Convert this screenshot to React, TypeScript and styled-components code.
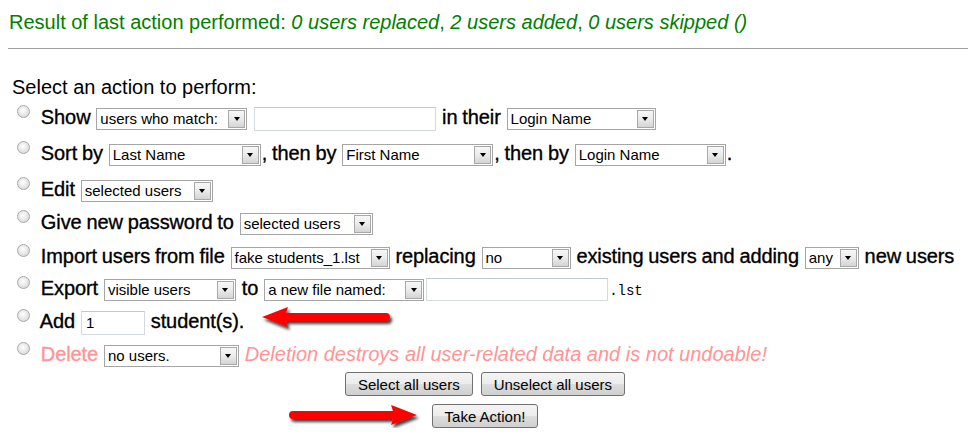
import React from "react";
import styled, { createGlobalStyle } from "styled-components";

const Global = createGlobalStyle`
  html, body { background: #fff; }
  body {
    margin: 8px;
    font-family: "Liberation Sans", Arial, sans-serif;
    color: #000;
  }
`;

const Page = styled.div`
  position: relative;
`;

const Result = styled.div`
  font-size: 20px;
  line-height: 28px;
  color: #008000;
  padding-left: 1px;
  white-space: nowrap;
`;

const Rule = styled.div`
  margin: 12px -8px 0 0;
  border-top: 1px solid #a0a0a0;
`;

const Actions = styled.form`
  margin-top: 25px;
  padding-left: 4px;
`;

const Title = styled.div`
  font-size: 20px;
  line-height: 26px;
  white-space: nowrap;
`;

const Row = styled.div<{ $h: number; $danger?: boolean }>`
  height: ${(p) => p.$h}px;
  line-height: ${(p) => p.$h}px;
  font-size: 20px;
  font-weight: normal;
  letter-spacing: -0.1px;
  word-spacing: -0.6px;
  -webkit-text-stroke: 0.35px ${(p) => (p.$danger ? "#ff9494" : "#000")};
  white-space: nowrap;
  color: ${(p) => (p.$danger ? "#ff9494" : "#000")};
`;

const Radio = styled.span`
  display: inline-block;
  box-sizing: border-box;
  width: 13px;
  height: 13px;
  margin: 0 6px 0 5px;
  border-radius: 50%;
  border: 1px solid #a8a8a8;
  background: radial-gradient(circle at 45% 40%, #ffffff 0%, #ececec 40%, #cfcfcf 100%);
  vertical-align: 6px;
`;

const SelectBox = styled.span<{ $w: number }>`
  display: inline-flex;
  box-sizing: border-box;
  width: ${(p) => p.$w}px;
  height: 22px;
  margin: 0 1px;
  border: 1px solid #a5a5a5;
  background: #fff;
  vertical-align: middle;
  font-size: 15px;
  font-weight: normal;
  font-style: normal;
  line-height: 20px;
  letter-spacing: 0;
  word-spacing: 0;
  color: #000;
  -webkit-text-stroke: 0;
`;

const SelectText = styled.span`
  flex: 1;
  padding-left: 3px;
  overflow: hidden;
  white-space: nowrap;
`;

const SelectButton = styled.span`
  display: flex;
  align-items: center;
  justify-content: center;
  box-sizing: border-box;
  width: 17px;
  margin: 1px;
  border: 1px solid #a8a8a8;
  background: linear-gradient(#f7f7f7 0%, #ebebeb 50%, #d4d4d4 100%);
`;

const Triangle = styled.span`
  width: 0;
  height: 0;
  border-left: 3.5px solid transparent;
  border-right: 3.5px solid transparent;
  border-top: 4px solid #000;
`;

const TextField = styled.input<{ $w: number; $h?: number }>`
  box-sizing: border-box;
  width: ${(p) => p.$w}px;
  height: ${(p) => p.$h ?? 24}px;
  margin: 0 1px;
  padding: 0 4px;
  border: 1px solid #d5dae0;
  border-top-color: #c3c8cf;
  vertical-align: middle;
  font-family: "Liberation Sans", Arial, sans-serif;
  font-size: 15px;
  letter-spacing: 0;
  -webkit-text-stroke: 0;
  color: #000;
  background: #fff;
  outline: none;
`;

const Mono = styled.span`
  font-family: "Liberation Mono", "Courier New", monospace;
  font-size: 14px;
  font-weight: normal;
  letter-spacing: 0;
  -webkit-text-stroke: 0;
`;

const Warn = styled.span`
  font-size: 20px;
  font-weight: normal;
  font-style: italic;
  letter-spacing: 0;
  word-spacing: 0;
  -webkit-text-stroke: 0;
`;

const ButtonRow = styled.div<{ $top: number }>`
  text-align: center;
  margin-top: ${(p) => p.$top}px;
  padding-right: 10px;
  height: 24px;
`;

const Button = styled.button`
  box-sizing: border-box;
  height: 24px;
  margin: 0 4px;
  padding: 0 12px;
  border: 1px solid #707070;
  border-radius: 3px;
  background: linear-gradient(#f4f4f4 0%, #ececec 48%, #dddddd 52%, #cfcfcf 100%);
  font-family: "Liberation Sans", Arial, sans-serif;
  font-size: 15px;
  color: #000;
  vertical-align: top;
`;

const ArrowSvg = styled.svg<{ $x: number; $y: number }>`
  position: absolute;
  left: ${(p) => p.$x}px;
  top: ${(p) => p.$y}px;
  overflow: visible;
  pointer-events: none;
`;

const Select = ({ w, children }: { w: number; children: React.ReactNode }) => (
  <SelectBox $w={w}>
    <SelectText>{children}</SelectText>
    <SelectButton>
      <Triangle />
    </SelectButton>
  </SelectBox>
);

const ARROW =
  "M4 12 C13 9 21 5 30 2 L28 8 L128 8 A4 4 0 0 1 128 16 L28 16 L30 22 C21 19 13 15 4 12 Z";

const Arrow = ({ x, y, right, id }: { x: number; y: number; right?: boolean; id: string }) => (
  <ArrowSvg $x={x} $y={y} width={137} height={30} viewBox="0 0 137 30">
    <defs>
      <filter id={id} x="-10%" y="-40%" width="130%" height="200%">
        <feDropShadow dx="2" dy="3" stdDeviation="1.6" floodColor="#000" floodOpacity="0.75" />
      </filter>
    </defs>
    <g filter={`url(#${id})`}>
      <path d={ARROW} fill="#ff0000" transform={right ? "translate(137 0) scale(-1 1)" : undefined} />
    </g>
  </ArrowSvg>
);

export default function App() {
  return (
    <Page>
      <Global />
      <Result>
        Result of last action performed: <i>0 users replaced</i>, <i>2 users added</i>,{" "}
        <i>0 users skipped ()</i>
      </Result>
      <Rule />
      <Actions onSubmit={(e) => e.preventDefault()}>
        <Title>Select an action to perform:</Title>
        <Row $h={35}>
          <Radio /> Show <Select w={151}>users who match:</Select> <TextField $w={182} /> in their{" "}
          <Select w={149}>Login Name</Select>
        </Row>
        <Row $h={37}>
          <Radio /> Sort by <Select w={152}>Last Name</Select>, then by <Select w={151}>First Name</Select>,
          then by <Select w={151}>Login Name</Select>.
        </Row>
        <Row $h={34}>
          <Radio /> Edit <Select w={132}>selected users</Select>
        </Row>
        <Row $h={33}>
          <Radio /> Give new password to <Select w={133}>selected users</Select>
        </Row>
        <Row $h={34}>
          <Radio /> Import users from file <Select w={159}>fake students_1.lst</Select> replacing{" "}
          <Select w={89}>no</Select> existing users and adding <Select w={54}>any</Select> new users
        </Row>
        <Row $h={31}>
          <Radio /> Export <Select w={132}>visible users</Select> to <Select w={160}>a new file named:</Select>
          <TextField $w={182} $h={23} />
          <Mono>.lst</Mono>
        </Row>
        <Row $h={34}>
          <Radio /> Add <TextField $w={64} defaultValue="1" /> student(s).
        </Row>
        <Row $h={32} $danger>
          <Radio /> Delete <Select w={135}>no users.</Select>{" "}
          <Warn>Deletion destroys all user-related data and is not undoable!</Warn>
        </Row>
        <ButtonRow $top={2}>
          <Button type="button">Select all users</Button>
          <Button type="button">Unselect all users</Button>
        </ButtonRow>
        <ButtonRow $top={8}>
          <Button type="submit">Take Action!</Button>
        </ButtonRow>
      </Actions>
      <Arrow id="arrowA" x={250} y={297} />
      <Arrow id="arrowB" x={276} y={395} right />
    </Page>
  );
}
